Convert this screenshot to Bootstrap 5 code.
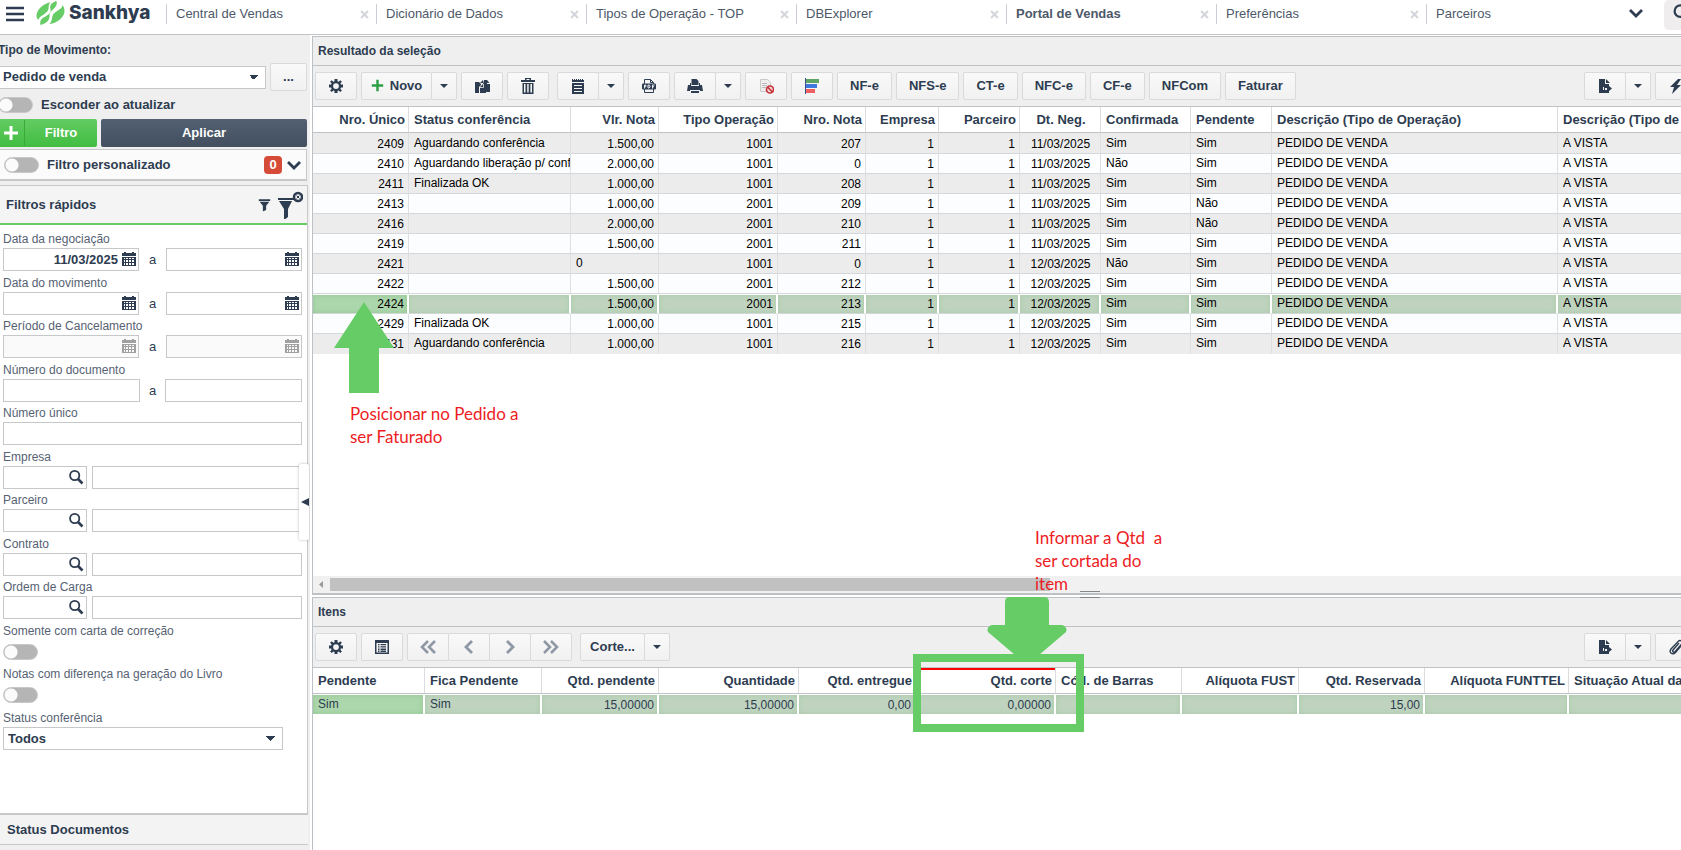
<!DOCTYPE html>
<html lang="pt-BR">
<head>
<meta charset="utf-8">
<meta name="viewport" content="width=device-width, initial-scale=1">
<title>Sankhya - Portal de Vendas</title>
<link href="https://cdn.jsdelivr.net/npm/bootstrap@5.3.0/dist/css/bootstrap.min.css" rel="stylesheet">
<style>
:root{--ink:#2d3c50;--soft:#566273;--line:#bcc1c5;--panel:#efefef;--green:#66cc66}
body{font-family:"Liberation Sans",Arial,sans-serif;font-size:13px;line-height:16px;color:var(--ink);background:#fff}
svg{display:block;flex:none}
.ic{width:16px;height:16px;fill:currentColor}
/* top bar */
.topbar{height:35px;border-bottom:1px solid #c3c3c3}
.brand{width:166px;color:var(--ink);text-decoration:none}
.brand b{font:800 19px/24px Inter,sans-serif}
.apptab{width:210px;height:20px;border-left:1px solid #c9ced6;color:#4d5869}
.apptab.active a{font-weight:bold}
.apptab a{color:inherit;text-decoration:none;padding-left:9px}
.plain{border:0;background:none;padding:0;color:inherit}
.closer{color:#d3d6da;margin-right:6px}
.finder{width:17px;height:30px;background:#efeded;border-radius:5px 0 0 5px}
/* controls */
.tool{height:28px;min-width:42px;padding:0 12px;border:1px solid #d9dadb;border-radius:2px;background:linear-gradient(#f9f9f9,#f1f1f1);font-weight:bold;color:var(--ink);white-space:nowrap;display:inline-flex;align-items:center;justify-content:center;gap:6px}
.tool.narrow{min-width:26px;width:26px;padding:0}
.tool.novo{width:71px;padding:0}
.tool.corte{width:65px;padding:0}
.tool.more{width:37px;min-width:37px;padding:0}
.joined .tool+.tool{margin-left:-1px}
.caret{width:0;height:0;border:4px solid transparent;border-top:4px solid var(--ink);border-bottom:0}
.off{color:#8f98a5}
.switch{appearance:none;width:35px;height:16px;margin:0;border:1px solid #c8c8c8;border-radius:8px;background:radial-gradient(circle at 7px 7px,#fbfbfb 6px,#b5b5b5 7px);flex:none}
.box{height:23px;border:1px solid #c6c8ca;background-color:#fff;border-radius:0;padding:0 4px;color:var(--ink);font-weight:bold;min-width:0}
.box:disabled{background:#fafafa}
select.box{appearance:none;background-image:linear-gradient(45deg,transparent 50%,var(--ink) 50%),linear-gradient(-45deg,transparent 50%,var(--ink) 50%);background-size:5px 5px;background-repeat:no-repeat;background-position:right 11px center,right 6px center}
/* sidebar */
.side{width:310px;background:#f0efef;overflow:hidden}
.top-form{margin-left:-2px;padding:7px 3px 0 0}
.top-form>label{font-size:12px;margin-bottom:5px}
.kind{width:268px}
.switch-row{padding:6px 0}
.go-green{background:linear-gradient(#62cc62,#41bd41);color:#fff;border:0;border-radius:2px;height:28px;width:99px}
.go-green span:first-child{width:27px;height:26px;border-right:1px solid #3aa93a}
.go-dark{background:linear-gradient(#526072,#434f5f);color:#fff;border:0;border-radius:2px;height:28px}
.custom{height:32px;margin:2px 3px 0 0;border:1px solid #c8c8c8;border-left:0;border-bottom-width:2px;background:#fbfbfb}
.count{width:18px;height:18px;border-radius:4px;background:#d64b37;color:#fff}
.quick{margin:4px 2px 0 0;border:1px solid #c6c8ca;border-left:0;background:#fff;position:relative}
.quick-head{height:39px;background:#f5f4f4;border-bottom:2px solid var(--green);padding:0 4px 0 6px}
.fields{padding:6px 6px 0 3px}
.field{height:43px;position:relative}
.field:nth-child(odd){height:44px}
.field label{display:block;font-size:12px;line-height:17px;color:var(--soft)}
.dated{position:relative;width:136px}
.dated.wide{width:137px}
.dated .box{width:100%;text-align:right;padding-right:20px}
.dated button{position:absolute;right:3px;top:4px}
.coded{position:relative;width:84px}
.coded .box{width:100%}
.coded button{position:absolute;right:3px;top:3px}
.status-pick{width:280px}
.fold{position:absolute;right:-2px;top:278px;width:10px;height:76px;background:#fff;border:0;padding:0;border-radius:2px;box-shadow:0 0 3px #8889;z-index:2}
.docs{height:31px;border-top:1px solid #c6c8ca;border-bottom:1px solid #c6c8ca;background:#f4f3f3;margin:0 2px 5px 0;padding-left:7px}
/* grids */
.work{margin-left:2px;padding-top:1px}
.pane-a,.pane-b{position:relative;min-height:0;border-left:1px solid var(--line);border-top:1px solid var(--line)}
.pane-a{flex:559 1 0;border-bottom:2px solid var(--line)}
.pane-b{flex:253 1 0;margin-top:2px}
.pane-title{height:29px;background:var(--panel);border-bottom:1px solid #bfc1c3;padding-left:5px;font-size:12px;font-weight:bold}
.bar{height:41px;background:var(--panel);border-bottom:1px solid #bfc3c6;padding:0 0 1px 2px;gap:4px;overflow:hidden}
.bar .last{margin-right:-16px;gap:4px}
.clip{overflow:hidden}
.data{table-layout:fixed;width:1460px;min-width:100%;border-collapse:separate;border-spacing:0}
.data th{height:26px;font-size:13px;border-right:1px solid #dadcde;border-bottom:1px solid #bfc3c6;padding:0 3px 0 5px;white-space:nowrap;overflow:hidden}
.data td{height:20px;line-height:18px;font-size:12px;padding:0 4px 1px 5px;color:#000;white-space:nowrap;overflow:hidden;border-right:1px solid #dde0e3;border-bottom:1px solid #d5d8db;background:#fcfdff}
.data .n{text-align:right}
.data td.n,.data td.c{padding:1px 4px 0 5px}
.data .c{text-align:center}
.data tbody tr:nth-child(odd) td{background:#ececec}
.data tbody tr:first-child td{height:21px}
.data tbody tr:last-child td{border-bottom-color:#ececec}
.data tbody tr.sel td{background:#bfd3bf;border-right:2px solid #fff;border-top:1px solid #fff;line-height:17px;padding-right:3px;box-shadow:inset 0 0 5px #a7cba7;background-clip:padding-box}
.data tbody tr.sel td:first-child{background:#acd6ac;background-clip:padding-box;box-shadow:inset 0 0 5px #92c892}
.items td{color:var(--ink)!important}
.items .sel td{border-bottom-color:#fff!important}
.items .edit{box-shadow:inset 0 2px 0 red}
.hbar{height:17px;background:#f1f1f1;padding:0 0 1px 6px;gap:7px}
.hbar .thumb{width:720px;height:13px;background:#c1c1c1}
/* guide marks lying over the grids */
.mark-over{position:absolute;z-index:3;pointer-events:none}
.note{font:17px/23px Lato,sans-serif;color:#ed1c24;white-space:pre}
.frame{width:171px;height:78px;border:8px solid var(--green);left:600px;top:56px}
.grip{left:767px;bottom:-5px;width:20px;height:7px;border:1px solid #85888b;border-width:1px 0}
</style>
</head>
<body class="vh-100 d-flex flex-column overflow-hidden">
<svg width="0" height="0" class="position-absolute" aria-hidden="true">
<symbol id="gear" viewBox="0 0 16 16"><path fill-rule="evenodd" d="M6.500 1h3v2.200l1.200.5L12.300 2.200l1.600 1.600-1.500 1.600.5 1.200H15v3h-2.100l-.5 1.200 1.500 1.600-1.600 1.600-1.600-1.500-1.200.5V15h-3v-2l-1.200-.5L3.700 14l-1.600-1.600 1.500-1.600-.5-1.200H1v-3h2.100l.5-1.200L2.100 3.800l1.600-1.600 1.600 1.500 1.200-.5zM8 5.200a2.900 2.900 0 100 5.800 2.900 2.900 0 000-5.800z"/></symbol>
<symbol id="cal" viewBox="0 0 14 14"><path fill-rule="evenodd" d="M2 0h2v1h6V0h2v1h2v3H0V1h2zM0 5h14v9H0zM2 6v1h1V6zm2 0v1h2V6zm3 0v1h2V6zm3 0v1h2V6zM2 8v2h1V8zm2 0v2h2V8zm3 0v2h2V8zm3 0v2h2V8zM2 11v2h1v-2zm2 0v2h2v-2zm3 0v2h2v-2zm3 0v2h2v-2z"/></symbol>
<symbol id="lens" viewBox="0 0 16 16"><g fill="none" stroke="currentColor"><circle cx="6.700" cy="6.500" r="4.600" stroke-width="1.800"/><path d="M10 10l4.500 4.500" stroke-width="2.600"/></g></symbol>
<symbol id="chev" viewBox="0 0 16 16"><path d="M2 5l6 6 6-6" fill="none" stroke="currentColor" stroke-width="2.800"/></symbol>
<symbol id="x" viewBox="0 0 16 16"><path d="M3 3l10 10M13 3L3 13" fill="none" stroke="currentColor" stroke-width="3"/></symbol>
<symbol id="plus" viewBox="0 0 16 16"><path d="M6.500 1h3v5.500H15v3H9.500V15h-3V9.500H1v-3h5.500z"/></symbol>
<symbol id="copy" viewBox="0 0 16 16"><path d="M1 4h4l2 2v1L5 9v6H1zM6 9l3-3 1-4h3v4h3v8h-4v1H6z"/><path d="M9 2v3H6zM13 2l2.500 3H13z"/><path d="M9.500 6v3.500H6" fill="none" stroke="#f5f5f5" stroke-width=".8"/></symbol>
<symbol id="trash" viewBox="0 0 16 16"><path fill-rule="evenodd" d="M5 0h6v2h4v2H1V2h4zm1.500 1v1h3V1zM2.500 5h11v11h-11zM4 6v8.500h1.500V6zm3.200 0v8.500h1.500V6zm3.200 0v8.500H12V6z"/></symbol>
<symbol id="notes" viewBox="0 0 16 16"><path fill-rule="evenodd" d="M2 1h1v1h1V1h1v1h1V1h1v1h1V1h1v1h1V1h1v1h1V1h1v1h1v2H2zM2 5h12v11H2zm2 2v1h8V7zm0 3v1h8v-1zm0 3v1h8v-1z"/></symbol>
<symbol id="pdf" viewBox="0 0 16 16"><path fill="none" stroke="currentColor" d="M3.500 6V1.500h6l3 3V6M9.500 1.500v3h3M3.500 11v3.500h9V11"/><rect x="1" y="5.500" width="14" height="6" rx="1"/><path fill="none" stroke="#fff" stroke-width=".9" d="M3.500 10.500V7h1.300v1.700H3.500M7 7v3h1l1-1V7.800L8 7zM11.500 10.500V7h2M11.500 8.700H13"/></symbol>
<symbol id="printer" viewBox="0 0 16 16"><path d="M4.500 1h5l2 2v4h-7zM1 7h2V5h1v3h8V5h1v2h2l1 6h-3v-1H3v1H0zM4 13h8v2H4z"/></symbol>
<symbol id="denied" viewBox="0 0 16 16"><path fill="#eee" stroke="#c9c9c9" d="M2.500 1.500h7l3 3v9h-10z"/><path stroke="#bbb" d="M4 5.500h5M4 7.500h5M4 9.500h4"/><circle cx="12" cy="11.500" r="3.500" fill="#f6dddd" stroke="#c6333a" stroke-width="1.700"/><path d="M9.500 9l5 5" stroke="#c6333a" stroke-width="1.700"/></symbol>
<symbol id="chart" viewBox="0 0 16 16"><path fill="#5fa565" d="M2 1h13v4H2z"/><path fill="#3f79dd" d="M2 6h11v4H2z"/><path fill="#ef6060" d="M2 11h9v4H2z"/><path fill="#3a4e8a" d="M1 0h1v16H1z"/></symbol>
<symbol id="export" viewBox="0 0 16 16"><path fill-rule="evenodd" d="M2 1h6v5h4v2l3 2.500-3 2.500v2H2zm4 8v3h1V9zm2 1v2h2v-2zM9 1l4 4H9z"/></symbol>
<symbol id="bolt" viewBox="0 0 16 16"><path d="M10 1L2 9h4l-2 7 9-9H9l4-6z"/></symbol>
<symbol id="clipicon" viewBox="0 0 16 16"><path fill="none" stroke="currentColor" stroke-width="1.400" d="M11 4l-6 7c-1 1.500.800 3 2 1.700l6.500-7.500c2-2.500-1.300-5-3.300-2.800L3 10c-2.500 3.500 1.500 6.500 4.500 3.500L13 7"/></symbol>
<symbol id="form" viewBox="0 0 16 16"><path fill-rule="evenodd" d="M1 1h14v14H1zm1.500 3v9.500h11V4zM4 5h1.500v1.300H4zm2.500 0H12v1.300H6.500zM4 7.300h1.500v1.300H4zm2.500 0H12v1.300H6.500zM4 9.600h1.500v1.300H4zm2.500 0H12v1.300H6.500zM4 11.600h1.500v1.300H4zm2.500 0H12v1.300H6.500z"/></symbol>
<symbol id="prev" viewBox="0 0 16 16"><path d="M11 2L5 8l6 6" fill="none" stroke="currentColor" stroke-width="2.800"/></symbol>
<symbol id="first" viewBox="0 0 16 16"><path d="M8 2L2 8l6 6M15 2L9 8l6 6" fill="none" stroke="currentColor" stroke-width="2.600"/></symbol>
<symbol id="funnel" viewBox="0 0 16 16"><path d="M1 1h14v2H1zM2 4h12L10 9v5l-4 2V9z"/></symbol>
</svg>

<header class="topbar d-flex flex-shrink-0">
  <a href="#" class="brand d-flex align-items-center flex-shrink-0 ps-1 pb-2" aria-label="Sankhya">
    <svg width="24" height="20" viewBox="0 0 24 20"><path d="M2 5h18M2 11h18M2 17h18" stroke="#2d3c50" stroke-width="2.400"/></svg>
    <svg class="ms-2 me-1" width="29" height="24" viewBox="0 0 28 24" fill="#66cc66"><path d="M14 1C6 3 0 9 0 15c0 2 1 3 2 4 0-4 9-6 10-11 .4-3 0-5 2-7zM20 0c-6 2-7 5-6 8s-2 6-6 8c-3 1.500-5 4-4 8 7-2 9-5 9-9s2-5 4-7 4-4 3-8zM26 4c0 5-9 6-10 11-.6 3-1 6-3 8 8-1 15-7 15-13 0-2-.5-4-2-6z"/></svg>
    <b>Sankhya</b>
  </a>
  <nav class="d-flex flex-grow-1 pt-1 overflow-hidden" aria-label="Abas" id="tabs"></nav>
  <button class="plain me-3 pb-2" aria-label="Mais abas"><svg class="ic"><use href="#chev"/></svg></button>
  <button class="plain finder overflow-hidden flex-shrink-0 ms-1" aria-label="Buscar"><svg width="20" height="20" viewBox="0 0 16 16" class="ms-2 mb-1"><use href="#lens"/></svg></button>
</header>

<div class="d-flex flex-grow-1" style="min-height:0">
  <aside class="side d-flex flex-column flex-shrink-0">
    <form class="top-form">
      <label for="kind" class="d-block fw-bold">Tipo de Movimento:</label>
      <div class="d-flex align-items-center gap-1">
        <select id="kind" class="box kind"><option>Pedido de venda</option></select>
        <button type="button" class="tool more">...</button>
      </div>
      <div class="switch-row d-flex align-items-center"><input type="checkbox" class="switch" id="hide"><label for="hide" class="fw-bold ps-2">Esconder ao atualizar</label></div>
      <div class="d-flex gap-1">
        <button type="button" class="go-green d-flex align-items-center p-0 fw-bold"><span class="d-flex align-items-center justify-content-center"><svg class="ic"><use href="#plus"/></svg></span><span class="flex-grow-1">Filtro</span></button>
        <button type="button" class="go-dark flex-grow-1 fw-bold">Aplicar</button>
      </div>
    </form>
    <div class="custom d-flex align-items-center flex-shrink-0 ps-1"><input type="checkbox" class="switch" id="own"><label for="own" class="fw-bold ps-2 flex-grow-1">Filtro personalizado</label><span class="count d-flex align-items-center justify-content-center fw-bold">0</span><button class="plain ms-1 me-1" aria-label="Expandir"><svg class="ic"><use href="#chev"/></svg></button></div>
    <section class="quick d-flex flex-column flex-grow-1">
      <div class="quick-head d-flex align-items-center">
        <span class="fw-bold flex-grow-1">Filtros rápidos</span>
        <button class="plain me-1" aria-label="Filtrar"><svg width="13" height="14" viewBox="0 0 16 16" fill="currentColor"><use href="#funnel"/></svg></button>
        <button class="plain" aria-label="Limpar filtro"><svg width="28" height="28" viewBox="0 0 28 28" fill="currentColor"><path d="M3 7h17v2H3zM4 10h13l-4 8v8l-4 3V18z"/><circle cx="23" cy="6" r="4" fill="#f5f4f4" stroke="currentColor" stroke-width="2.500"/><path d="M21.500 4.500l3 3m0-3l-3 3" stroke="currentColor"/></svg></button>
      </div>
      <div class="fields" id="fields"></div>
      <button class="fold" aria-label="Recolher painel"><svg width="8" height="8" viewBox="0 0 8 8" class="ms-auto"><path d="M0 4l8-4v8z" fill="#2d3c50"/></svg></button>
    </section>
    <div class="docs d-flex align-items-center fw-bold flex-shrink-0">Status Documentos</div>
  </aside>

  <main class="work d-flex flex-column flex-grow-1 overflow-hidden">
    <section class="pane-a d-flex flex-column">
      <div class="pane-title d-flex align-items-center flex-shrink-0">Resultado da seleção</div>
      <div class="bar d-flex align-items-center flex-shrink-0">
        <button class="tool" aria-label="Configurações"><svg class="ic"><use href="#gear"/></svg></button>
        <div class="joined d-flex"><button class="tool novo"><svg width="13" height="13" viewBox="0 0 16 16" fill="#2e9e44"><use href="#plus"/></svg>Novo</button><button class="tool narrow" aria-label="Opções de novo"><i class="caret"></i></button></div>
        <button class="tool" aria-label="Duplicar"><svg class="ic"><use href="#copy"/></svg></button>
        <button class="tool me-1" aria-label="Excluir"><svg class="ic"><use href="#trash"/></svg></button>
        <div class="joined d-flex"><button class="tool" aria-label="Notas"><svg class="ic"><use href="#notes"/></svg></button><button class="tool narrow" aria-label="Opções de notas"><i class="caret"></i></button></div>
        <button class="tool" aria-label="PDF"><svg class="ic"><use href="#pdf"/></svg></button>
        <div class="joined d-flex"><button class="tool" aria-label="Imprimir"><svg class="ic"><use href="#printer"/></svg></button><button class="tool narrow" aria-label="Opções de impressão"><i class="caret"></i></button></div>
        <button class="tool" aria-label="Cancelar nota"><svg class="ic"><use href="#denied"/></svg></button>
        <button class="tool" aria-label="Legenda"><svg class="ic"><use href="#chart"/></svg></button>
        <button class="tool">NF-e</button><button class="tool">NFS-e</button><button class="tool">CT-e</button><button class="tool">NFC-e</button><button class="tool">CF-e</button><button class="tool">NFCom</button><button class="tool">Faturar</button>
        <div class="last d-flex ms-auto"><div class="joined d-flex"><button class="tool" aria-label="Exportar"><svg class="ic"><use href="#export"/></svg></button><button class="tool narrow" aria-label="Opções de exportação"><i class="caret"></i></button></div><button class="tool" aria-label="Ações"><svg class="ic"><use href="#bolt"/></svg></button></div>
      </div>
      <div class="clip flex-grow-1">
        <table class="data" id="orders"></table>
      </div>
      <div class="hbar d-flex align-items-center flex-shrink-0"><svg width="4" height="7" viewBox="0 0 4 7"><path d="M4 0v7L0 3.500z" fill="#999"/></svg><div class="thumb"></div></div>
      <svg class="mark-over" style="left:21px;top:265px" width="60" height="92" viewBox="0 0 60 92"><path fill="#66cc66" d="M30 0l30 46H45v45H15V46H0z"/></svg>
      <div class="mark-over note" style="left:37px;top:365px">Posicionar no Pedido a
ser Faturado</div>
      <div class="mark-over note" style="left:722px;top:489px">Informar a Qtd  a
ser cortada do
item</div>
      <div class="mark-over grip"></div>
    </section>
    <section class="pane-b d-flex flex-column">
      <div class="pane-title d-flex align-items-center flex-shrink-0">Itens</div>
      <div class="bar d-flex align-items-center flex-shrink-0">
        <button class="tool" aria-label="Configurações"><svg class="ic"><use href="#gear"/></svg></button>
        <button class="tool" aria-label="Formulário"><svg class="ic"><use href="#form"/></svg></button>
        <div class="joined d-flex me-1"><button class="tool off" aria-label="Primeiro"><svg class="ic"><use href="#first"/></svg></button><button class="tool off" aria-label="Anterior"><svg class="ic"><use href="#prev"/></svg></button><button class="tool off" aria-label="Próximo"><svg class="ic"><use href="#prev" transform="rotate(180 8 8)"/></svg></button><button class="tool off" aria-label="Último"><svg class="ic"><use href="#first" transform="rotate(180 8 8)"/></svg></button></div>
        <div class="joined d-flex"><button class="tool corte">Corte...</button><button class="tool narrow" aria-label="Opções de corte"><i class="caret"></i></button></div>
        <div class="last d-flex ms-auto"><div class="joined d-flex"><button class="tool" aria-label="Exportar"><svg class="ic"><use href="#export"/></svg></button><button class="tool narrow" aria-label="Opções de exportação"><i class="caret"></i></button></div><button class="tool" aria-label="Anexos"><svg class="ic"><use href="#clipicon"/></svg></button></div>
      </div>
      <div class="clip flex-grow-1"><table class="data items" id="items"></table></div>
      <svg class="mark-over" style="left:674px;top:-1px" width="80" height="60" viewBox="0 0 80 60"><path fill="#66cc66" d="M23 0h34q5 0 5 5v23h13q6 2 4 7L52 58H28L1 35q-2-5 4-7h13V5q0-5 5-5z"/></svg>
      <div class="mark-over frame"></div>
    </section>
  </main>
</div>

<script src="https://cdn.jsdelivr.net/npm/bootstrap@5.3.0/dist/js/bootstrap.bundle.min.js"></script>
<script>
// Open tabs
const tabs = ['Central de Vendas','Dicionário de Dados','Tipos de Operação - TOP','DBExplorer','Portal de Vendas','Preferências','Parceiros'];
document.getElementById('tabs').innerHTML = tabs.map((t, i) =>
  `<div class="apptab d-flex flex-shrink-0 justify-content-between align-items-center ${i === 4 ? 'active' : ''}"><a href="#">${t}</a>${i < 6 ? `<button class="plain closer" aria-label="Fechar ${t}"><svg width="11" height="11" viewBox="0 0 16 16"><use href="#x"/></svg></button>` : ''}</div>`).join('');

// Quick filters
const cal = d => `<button type="button" class="plain" ${d ? 'disabled style="color:#a0a0a0"' : ''} aria-label="Calendário"><svg width="14" height="14" viewBox="0 0 14 14" fill="currentColor"><use href="#cal"/></svg></button>`;
const range = (id, label, v = '', off = false, plain = false) => {
  const one = (n, val) => `<div class="dated ${plain ? 'wide' : ''}"><input class="box" id="${id}${n}" aria-label="${label} ${n ? 'final' : 'inicial'}" value="${val}" ${off ? 'disabled' : ''}>${plain ? '' : cal(off)}</div>`;
  return `<div class="field"><label for="${id}0">${label}</label><div class="d-flex justify-content-between align-items-center" style="width:299px">${one(0, v)}<span>a</span>${one(1, '')}</div></div>`;
};
const search = (id, label) => `<div class="field"><label for="${id}">${label}</label><div class="d-flex" style="width:299px;gap:5px"><div class="coded"><input class="box" id="${id}"><button type="button" class="plain" aria-label="Pesquisar ${label}"><svg class="ic"><use href="#lens"/></svg></button></div><input class="box flex-grow-1" aria-label="${label} nome"></div></div>`;
const toggle = (id, label) => `<div class="field"><label for="${id}">${label}</label><input type="checkbox" class="switch d-block mt-1" id="${id}"></div>`;
document.getElementById('fields').innerHTML =
  range('neg', 'Data da negociação', '11/03/2025') + range('mov', 'Data do movimento') +
  range('can', 'Período de Cancelamento', '', true) + range('doc', 'Número do documento', '', false, true) +
  `<div class="field"><label for="uni">Número único</label><input class="box" id="uni" style="width:299px"></div>` +
  search('emp', 'Empresa') + search('par', 'Parceiro') + search('con', 'Contrato') + search('car', 'Ordem de Carga') +
  toggle('cor', 'Somente com carta de correção') + toggle('liv', 'Notas com diferença na geração do Livro') +
  `<div class="field"><label for="sta">Status conferência</label><select class="box status-pick" id="sta"><option>Todos</option></select></div>`;

// Grids: [title, width, alignment class]
const head = cols => `<colgroup>${cols.map(c => `<col style="width:${c[1]}px">`).join('')}</colgroup><thead><tr>${cols.map(c => `<th class="${c[2]}" scope="col">${c[0]}</th>`).join('')}</tr></thead>`;
const oc = [['Nro. Único',96,'n'],['Status conferência',162,''],['Vlr. Nota',88,'n'],['Tipo Operação',119,'n'],['Nro. Nota',88,'n'],['Empresa',73,'n'],['Parceiro',81,'n'],['Dt. Neg.',81,'c'],['Confirmada',90,''],['Pendente',81,''],['Descrição (Tipo de Operação)',286,''],['Descrição (Tipo de Negociação)',215,'']];
const orders = [
  [2409,'Aguardando conferência','1.500,00',1001,207,'11','Sim','Sim'],
  [2410,'Aguardando liberação p/ conferência','2.000,00',1001,0,'11','Não','Sim'],
  [2411,'Finalizada OK','1.000,00',1001,208,'11','Sim','Sim'],
  [2413,'','1.000,00',2001,209,'11','Sim','Não'],
  [2416,'','2.000,00',2001,210,'11','Sim','Não'],
  [2419,'','1.500,00',2001,211,'11','Sim','Sim'],
  [2421,'','0',1001,0,'12','Não','Sim'],
  [2422,'','1.500,00',2001,212,'12','Sim','Sim'],
  [2424,'','1.500,00',2001,213,'12','Sim','Sim'],
  [2429,'Finalizada OK','1.000,00',1001,215,'12','Sim','Sim'],
  [2431,'Aguardando conferência','1.000,00',1001,216,'12','Sim','Sim']];
document.getElementById('orders').innerHTML = head(oc) + '<tbody>' + orders.map(r => {
  const v = [r[0], r[1], r[2], r[3], r[4], 1, 1, r[5] + '/03/2025', r[6], r[7], 'PEDIDO DE VENDA', 'A VISTA'];
  return `<tr class="${r[0] === 2424 ? 'sel' : ''}">${v.map((t, i) => `<td class="${t === '0' ? '' : oc[i][2]}">${t}</td>`).join('')}</tr>`;
}).join('') + '</tbody>';

const ic = [['Pendente',112,''],['Fica Pendente',117,''],['Qtd. pendente',117,'n'],['Quantidade',140,'n'],['Qtd. entregue',117,'n'],['Qtd. corte',140,'n edit'],['Cód. de Barras',126,''],['Alíquota FUST',117,'n'],['Qtd. Reservada',126,'n'],['Alíquota FUNTTEL',144,'n'],['Situação Atual da Nota',204,'']];
const item = ['Sim','Sim','15,00000','15,00000','0,00','0,00000','','','15,00','',''];
document.getElementById('items').innerHTML = head(ic) + `<tbody><tr class="sel">${item.map((t, i) => `<td class="${ic[i][2].replace(' edit', '')}">${t}</td>`).join('')}</tr></tbody>`;
</script>
</body>
</html>
